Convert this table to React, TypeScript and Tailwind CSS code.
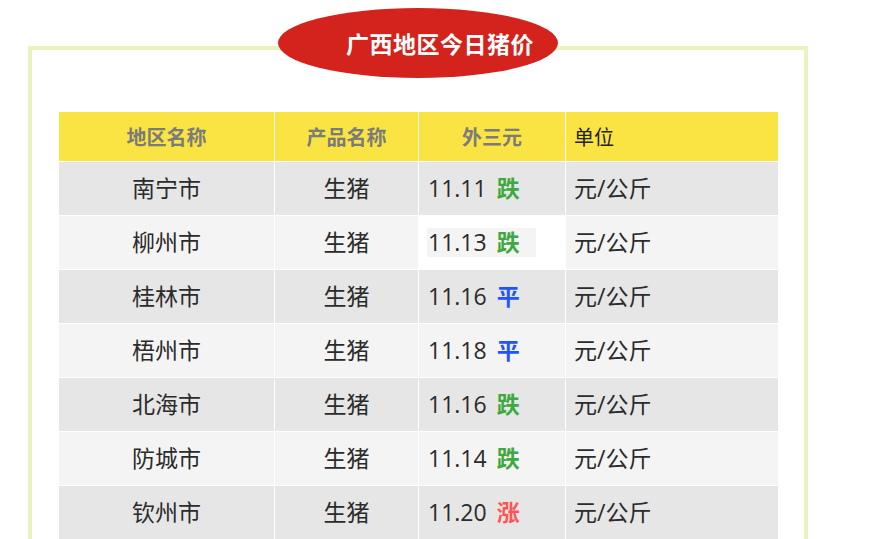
import React from "react";

type Row = { city: string; price: string; trend: "跌" | "平" | "涨"; hl?: boolean };

const rows: Row[] = [
  { city: "南宁市", price: "11.11", trend: "跌" },
  { city: "柳州市", price: "11.13", trend: "跌", hl: true },
  { city: "桂林市", price: "11.16", trend: "平" },
  { city: "梧州市", price: "11.18", trend: "平" },
  { city: "北海市", price: "11.16", trend: "跌" },
  { city: "防城市", price: "11.14", trend: "跌" },
  { city: "钦州市", price: "11.20", trend: "涨" },
];

const trendClass: Record<Row["trend"], string> = {
  跌: "text-[#3fa93f]",
  平: "text-[#1f55ff]",
  涨: "text-[#ff5454]",
};

export default function App() {
  return (
    <div
      className="w-[873px] h-[539px] overflow-hidden bg-white pl-[28px] pt-[8px]"
      style={{ fontFamily: '"Open Sans", "Noto Sans CJK SC", sans-serif' }}
    >
      <div className="relative w-[780px] pt-[38px]">
        <div className="absolute left-[250px] top-0 z-10 flex h-[70px] w-[280px] items-center justify-center rounded-[50%] bg-[#d4221c] pl-[44px]">
          <span
            className="text-[23px] font-bold leading-none text-white tracking-[0.5px]"
            style={{ fontFamily: '"Noto Sans CJK SC", sans-serif' }}
          >
            广西地区今日猪价
          </span>
        </div>
        <div className="border-[4px] border-[#e9f3bf] pl-[27px] pr-[26px] pt-[62px]">
          <div className="grid grid-cols-[215px_143px_146px_212px] gap-px bg-white">
            <div className="flex h-[49px] items-center justify-center bg-[#f9e443] text-[20px] font-bold text-[#7b7b7b]" style={{ fontFamily: '"Noto Sans CJK SC", sans-serif' }}>
              地区名称
            </div>
            <div className="flex h-[49px] items-center justify-center bg-[#f9e443] text-[20px] font-bold text-[#7b7b7b]" style={{ fontFamily: '"Noto Sans CJK SC", sans-serif' }}>
              产品名称
            </div>
            <div className="flex h-[49px] items-center justify-center bg-[#f9e443] text-[20px] font-bold text-[#7b7b7b]" style={{ fontFamily: '"Noto Sans CJK SC", sans-serif' }}>
              外三元
            </div>
            <div className="flex h-[49px] items-center bg-[#f9e443] pl-[8px] text-[20px] text-[#222]" style={{ fontFamily: '"Noto Sans CJK SC", sans-serif' }}>
              单位
            </div>
            {rows.map((r, i) => {
              const bg = i % 2 === 0 ? "bg-[#e6e6e6]" : "bg-[#f4f4f4]";
              return (
                <React.Fragment key={r.city}>
                  <div className={`flex h-[53px] items-center justify-center text-[23px] text-[#2b2b2b] ${bg}`}>
                    {r.city}
                  </div>
                  <div className={`flex h-[53px] items-center justify-center text-[23px] text-[#2b2b2b] ${bg}`}>
                    生猪
                  </div>
                  <div className={`flex h-[53px] items-center pl-[8px] text-[23px] text-[#2b2b2b] ${r.hl ? "bg-white" : bg}`}>
                    <span className={`inline-flex h-[29px] items-center pl-[1px] pr-[16px] ${r.hl ? "bg-[#f4f4f4]" : ""}`}>
                      {r.price}
                      <span className={`ml-[10px] font-bold ${trendClass[r.trend]}`}>{r.trend}</span>
                    </span>
                  </div>
                  <div className={`flex h-[53px] items-center pl-[8px] text-[23px] text-[#2b2b2b] ${bg}`}>
                    元/公斤
                  </div>
                </React.Fragment>
              );
            })}
          </div>
        </div>
      </div>
    </div>
  );
}
